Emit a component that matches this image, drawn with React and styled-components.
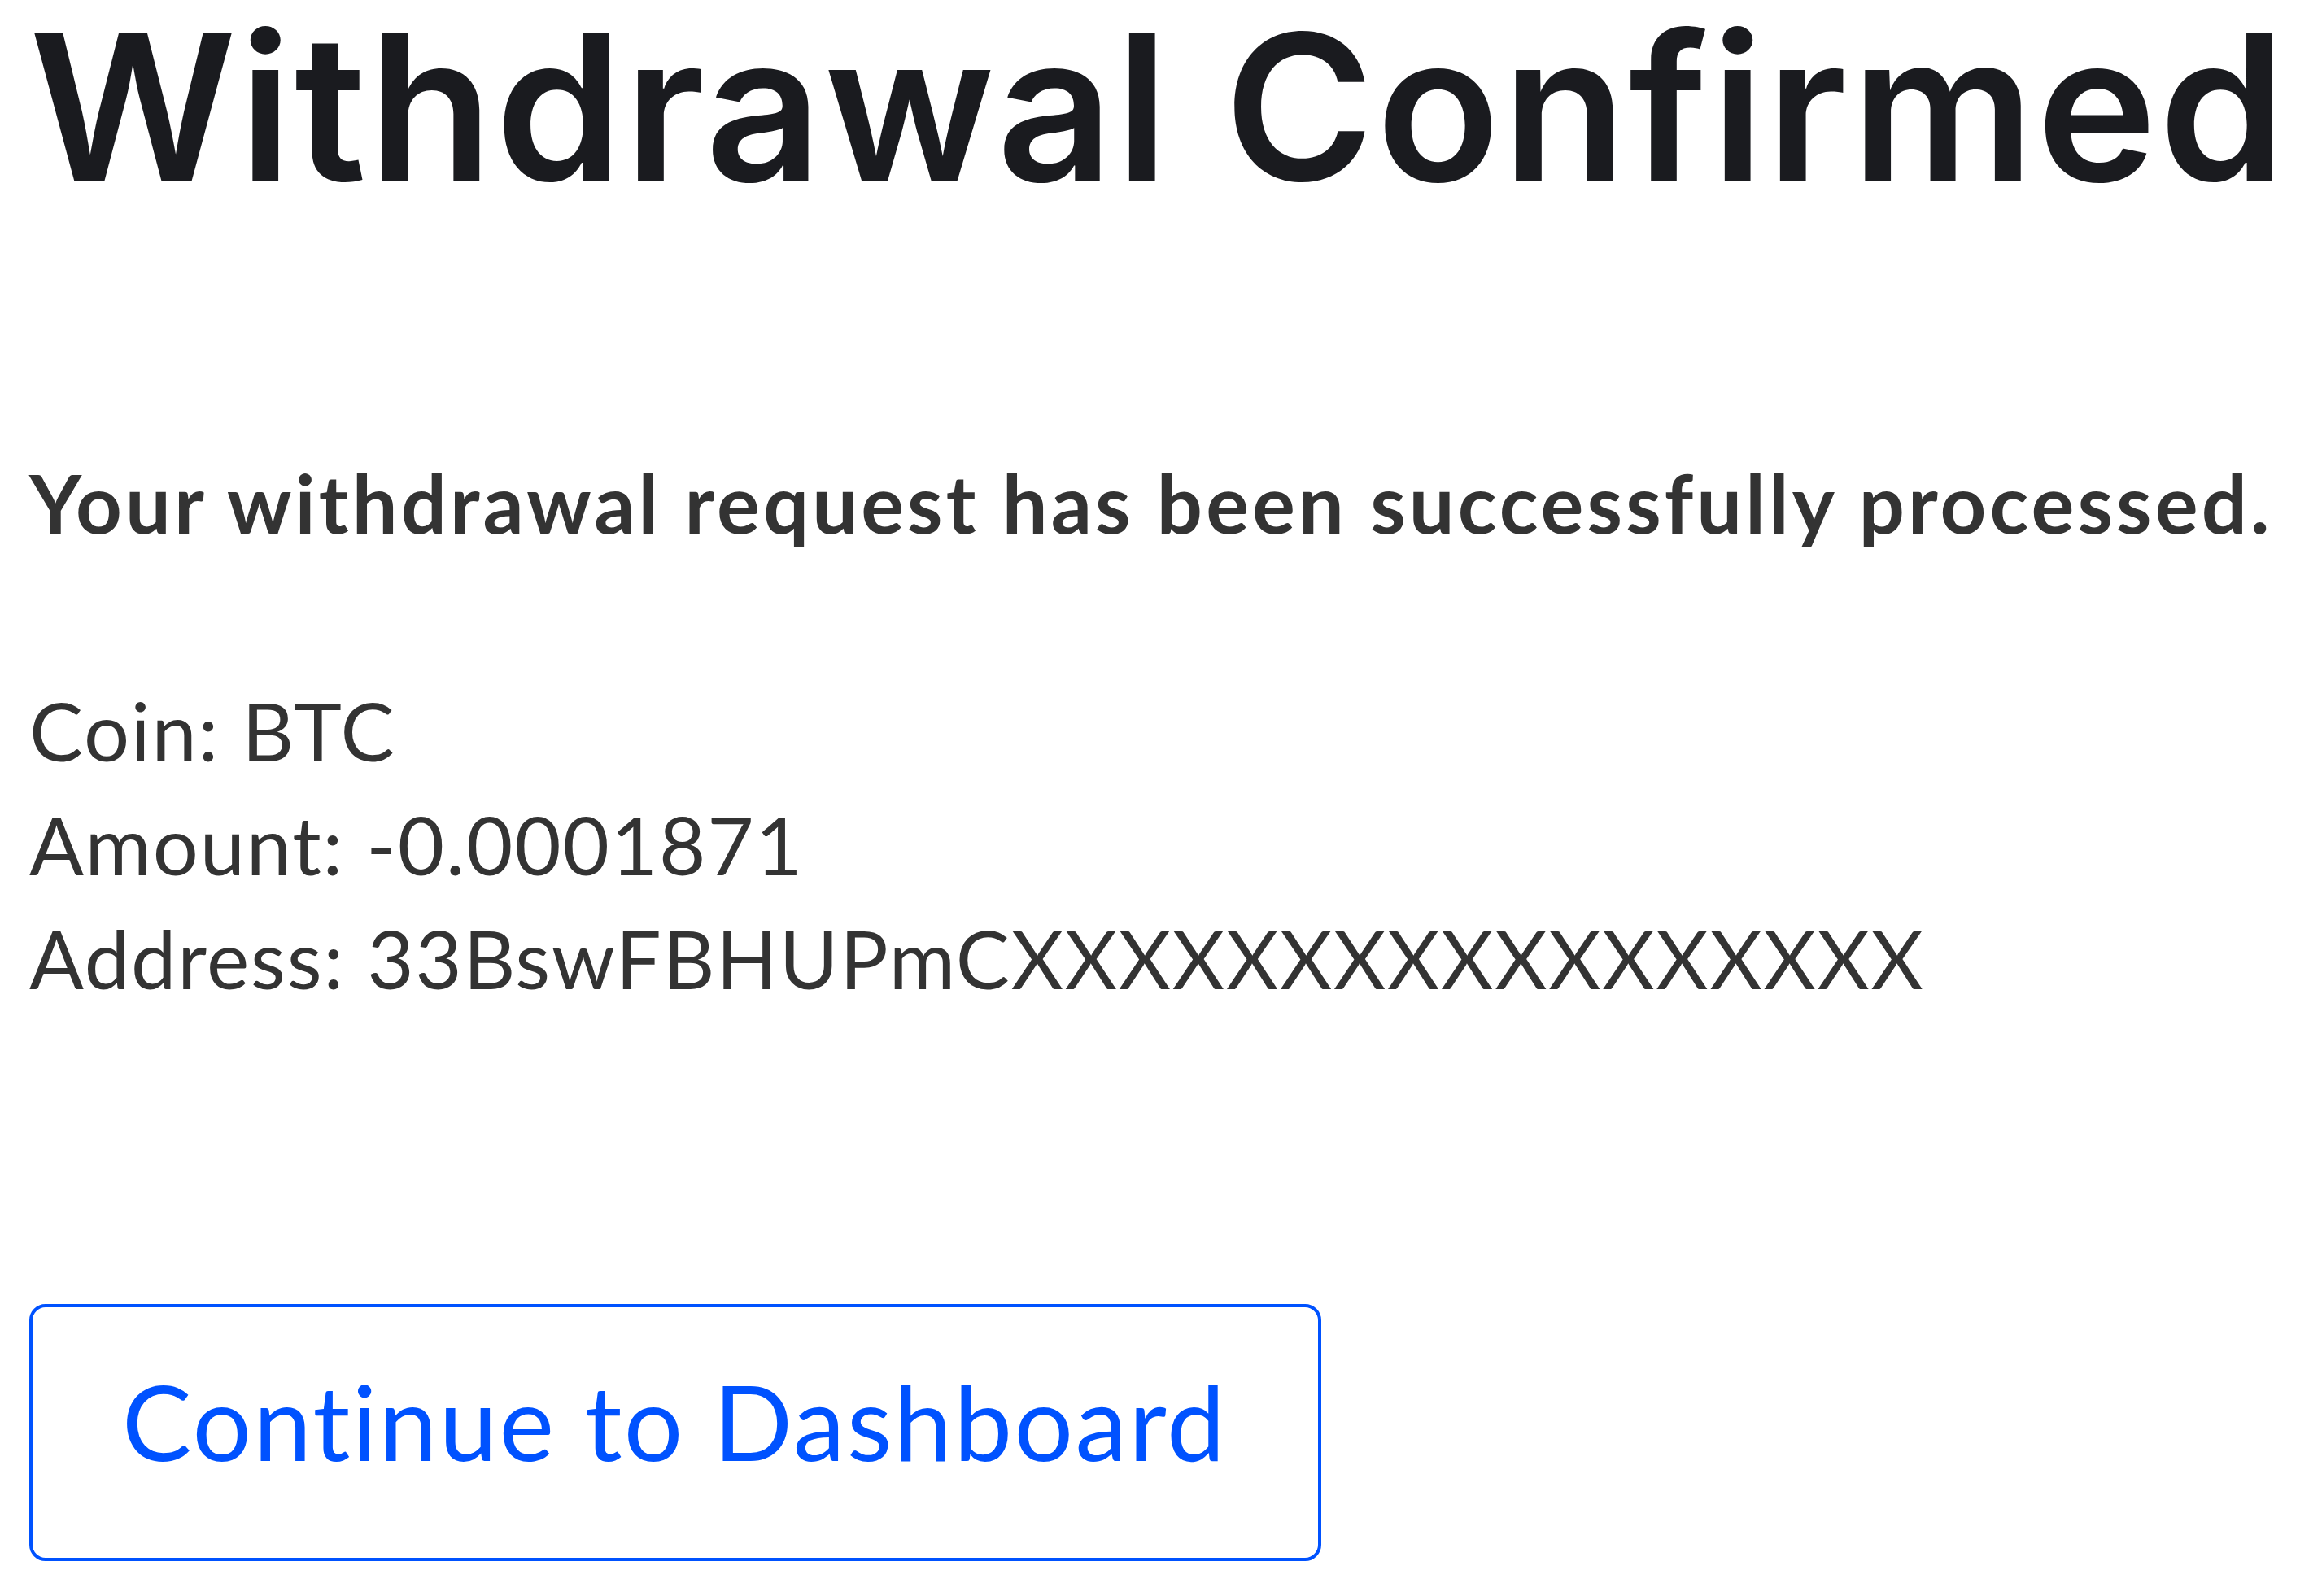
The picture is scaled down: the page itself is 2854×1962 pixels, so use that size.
import React from 'react';
import styled, { createGlobalStyle } from 'styled-components';

const GlobalStyle = createGlobalStyle`
  body {
    margin: 0;
    background: #ffffff;
  }
`;

const Page = styled.main`
  display: flex;
  flex-direction: column;
  align-items: flex-start;
  padding: 6px 0 0 36px;
`;

const Title = styled.h1`
  margin: 0;
  font-family: Inter, "Liberation Sans", sans-serif;
  font-weight: 600;
  font-size: 250px;
  line-height: 250px;
  letter-spacing: 2.6px;
  color: #1a1b1f;
  white-space: nowrap;
`;

const Lead = styled.p`
  margin: 302px 0 0;
  font-family: Lato, "Liberation Sans", sans-serif;
  font-weight: 700;
  font-size: 99px;
  line-height: 120px;
  letter-spacing: 4.1px;
  color: #333333;
  white-space: nowrap;
  font-variant-ligatures: none;
`;

const Details = styled.div`
  margin-top: 150px;
  display: flex;
  flex-direction: column;
`;

const Line = styled.div`
  font-family: Lato, "Liberation Sans", sans-serif;
  font-size: 99px;
  line-height: 140px;
  letter-spacing: 1.8px;
  color: #333333;
  white-space: nowrap;
  font-variant-ligatures: none;
`;

const ContinueButton = styled.button`
  margin-top: 355px;
  box-sizing: border-box;
  padding: 63px 112px 91px 110px;
  border: 4px solid #0052ff;
  border-radius: 20px;
  background: #ffffff;
  font-family: Lato, "Liberation Sans", sans-serif;
  font-size: 128px;
  line-height: 1.2;
  letter-spacing: 2.4px;
  color: #0052ff;
  font-variant-ligatures: none;
  cursor: pointer;
`;

const details = [
  ['Coin', 'BTC'],
  ['Amount', '-0.0001871'],
  ['Address', '33BswFBHUPmCXXXXXXXXXXXXXXXXX'],
];

export default function App() {
  return (
    <>
      <GlobalStyle />
      <Page>
        <Title>Withdrawal Confirmed</Title>
        <Lead>Your withdrawal request has been successfully processed.</Lead>
        <Details>
          {details.map(([label, value]) => (
            <Line key={label}>
              {label}: {value}
            </Line>
          ))}
        </Details>
        <ContinueButton>Continue to Dashboard</ContinueButton>
      </Page>
    </>
  );
}
